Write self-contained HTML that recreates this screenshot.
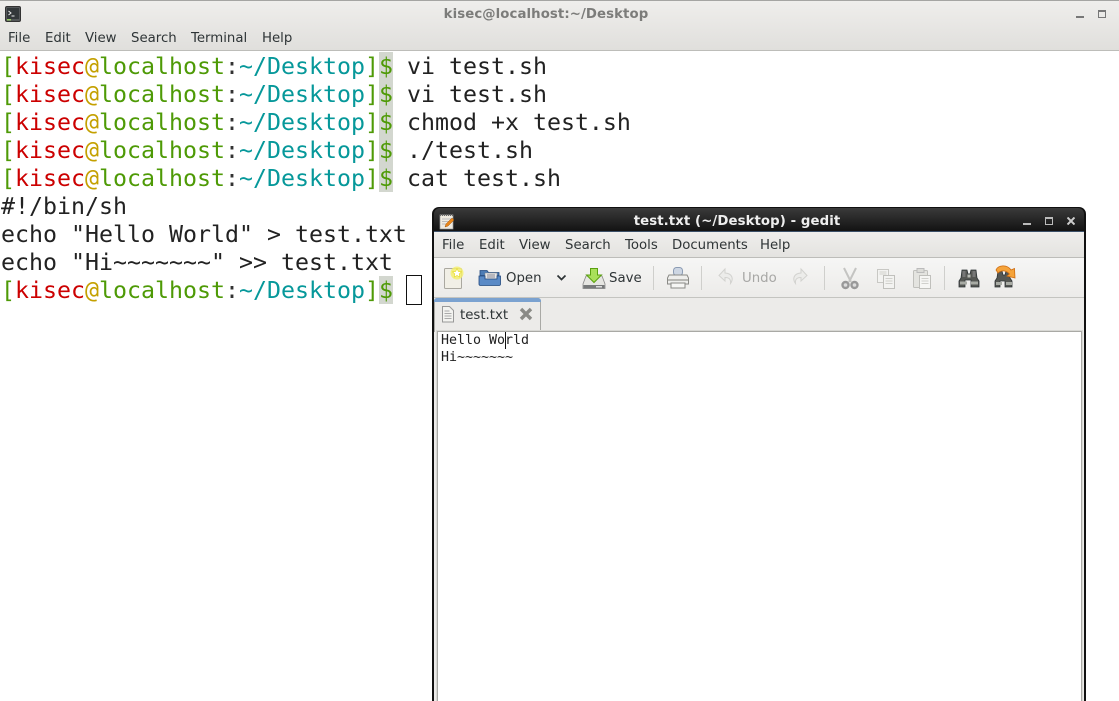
<!DOCTYPE html>
<html><head><meta charset="utf-8"><style>
html,body{margin:0;padding:0;width:1119px;height:701px;overflow:hidden;background:#fff;font-family:"DejaVu Sans",sans-serif}
.a{position:absolute;white-space:pre}
#ttl{left:0;top:0;width:1119px;height:51px;background:linear-gradient(#efeeec,#e0dfdc);border-top:1px solid #a5a5a3;border-bottom:1px solid #bdbdb9;box-sizing:border-box}
.m{font-size:13.3px;color:#2e3436;line-height:16px}
.t{font-family:"DejaVu Sans Mono",monospace;font-size:23.25px;line-height:28px;color:#222;left:1px;height:28px}
.g{color:#4e9a06}.r{color:#cc0000}.y{color:#c4a000}.c{color:#06989a}.k{color:#333}
.d{position:absolute;left:379px;width:14px;background:#d3d7cf}
.s{position:absolute;top:266px;width:1px;height:24px;background:#cfcfcc}
</style></head><body>
<div class="a" id="ttl"></div>
<svg class="a" style="left:5px;top:6px" width="17" height="17" viewBox="0 0 17 17"><rect x=".5" y=".5" width="15" height="15" rx="1.5" fill="#55585a" stroke="#333"/><rect x="2" y="2" width="12" height="11" fill="#33383a"/><path d="M3.500 5l2.500 2-2.500 2M6.500 10h3" stroke="#eee" fill="none"/><rect x="2" y="13" width="4" height="1.500" fill="#9c6"/></svg>
<div class="a" style="left:0;width:1092px;top:7px;text-align:center;font-weight:bold;font-size:13.3px;line-height:16px;color:#7c7c7a;letter-spacing:.08px">kisec@localhost:~/Desktop</div>
<div class="a" style="left:1076px;top:16px;width:8px;height:2px;background:#777"></div>
<div class="a" style="left:1098px;top:10px;width:6px;height:5px;border:1px solid #777;border-top-width:2px"></div>
<div class="a m" style="left:8px;top:31px">File</div>
<div class="a m" style="left:45px;top:31px">Edit</div>
<div class="a m" style="left:85px;top:31px">View</div>
<div class="a m" style="left:131px;top:31px">Search</div>
<div class="a m" style="left:191px;top:31px">Terminal</div>
<div class="a m" style="left:262px;top:31px">Help</div>

<div class="d" style="top:52px;height:140px"></div>
<div class="d" style="top:276px;height:28px"></div>
<div class="a t" style="top:53px"><span class="g">[</span><span class="r">kisec</span><span class="y">@</span><span class="g">localhost</span><span class="k">:</span><span class="c">~/Desktop</span><span class="g">]$</span> vi test.sh</div>
<div class="a t" style="top:81px"><span class="g">[</span><span class="r">kisec</span><span class="y">@</span><span class="g">localhost</span><span class="k">:</span><span class="c">~/Desktop</span><span class="g">]$</span> vi test.sh</div>
<div class="a t" style="top:109px"><span class="g">[</span><span class="r">kisec</span><span class="y">@</span><span class="g">localhost</span><span class="k">:</span><span class="c">~/Desktop</span><span class="g">]$</span> chmod +x test.sh</div>
<div class="a t" style="top:137px"><span class="g">[</span><span class="r">kisec</span><span class="y">@</span><span class="g">localhost</span><span class="k">:</span><span class="c">~/Desktop</span><span class="g">]$</span> ./test.sh</div>
<div class="a t" style="top:165px"><span class="g">[</span><span class="r">kisec</span><span class="y">@</span><span class="g">localhost</span><span class="k">:</span><span class="c">~/Desktop</span><span class="g">]$</span> cat test.sh</div>
<div class="a t" style="top:193px">#!/bin/sh</div>
<div class="a t" style="top:221px">echo "Hello World" &gt; test.txt</div>
<div class="a t" style="top:249px">echo "Hi~~~~~~~" &gt;&gt; test.txt</div>
<div class="a t" style="top:277px"><span class="g">[</span><span class="r">kisec</span><span class="y">@</span><span class="g">localhost</span><span class="k">:</span><span class="c">~/Desktop</span><span class="g">]$</span></div>
<div class="a" style="left:406px;top:275px;width:14px;height:28px;border:1px solid #111"></div>

<!-- gedit window -->
<div class="a" style="left:432px;top:207px;width:654px;height:494px;background:#111;border-radius:7px 7px 0 0"></div>
<div class="a" style="left:434px;top:208px;width:650px;height:24px;background:linear-gradient(#3a3a3a,#111);border-radius:6px 6px 0 0"></div>
<div class="a" style="left:434px;top:231px;width:650px;height:1px;background:#3c5068"></div>
<svg class="a" style="left:439px;top:213px" width="17" height="17" viewBox="0 0 17 17"><rect x="1" y="2" width="13" height="14" fill="#eeeae0" stroke="#999" stroke-width=".7"/><path d="M1 2h13" stroke="#666" stroke-dasharray="1 1" stroke-width="2"/><path d="M3 6h9M3 8.500h7M3 11h6" stroke="#bbb"/><path d="M6 14l1-3 6-6 2 2-6 6z" fill="#e8861a" stroke="#a85a10" stroke-width=".5"/></svg>
<div class="a" style="left:434px;width:606px;top:214px;text-align:center;font-weight:bold;font-size:13.3px;line-height:16px;color:#eee;letter-spacing:.08px">test.txt (~/Desktop) - gedit</div>
<div class="a" style="left:1023px;top:223px;width:8px;height:2px;background:#bbb"></div>
<div class="a" style="left:1045px;top:217px;width:6px;height:5px;border:1px solid #bbb;border-top-width:2px"></div>
<svg class="a" style="left:1067px;top:217px" width="8" height="8" viewBox="0 0 8 8"><path d="M.5.500l7 7M7.500.500l-7 7" stroke="#ccc" stroke-width="2"/></svg>

<div class="a" style="left:434px;top:232px;width:650px;height:469px;background:#ecebe9"></div>
<div class="a" style="left:434px;top:232px;width:650px;height:26px;background:linear-gradient(#efeeec,#e4e3e0);border-bottom:1px solid #bdbdb9;box-sizing:border-box"></div>
<div class="a m" style="left:442px;top:238px">File</div>
<div class="a m" style="left:479px;top:238px">Edit</div>
<div class="a m" style="left:519px;top:238px">View</div>
<div class="a m" style="left:565px;top:238px">Search</div>
<div class="a m" style="left:625px;top:238px">Tools</div>
<div class="a m" style="left:672px;top:238px">Documents</div>
<div class="a m" style="left:760px;top:238px">Help</div>

<div class="a" style="left:434px;top:258px;width:650px;height:40px;background:linear-gradient(#f6f6f5,#ecebe9);border-bottom:1px solid #c4c4c0;box-sizing:border-box"></div>

<!-- New -->
<svg class="a" style="left:442px;top:266px" width="24" height="24" viewBox="0 0 24 24"><rect x="2.500" y="2.500" width="17" height="20" rx="1" fill="#f1efe6" stroke="#aaa8a0"/><circle cx="15" cy="7" r="6.500" fill="#f5ee70" opacity=".85"/><path d="M15 2.500l1.400 3 3.100.4-2.300 2.100.6 3.100-2.800-1.600-2.800 1.600.6-3.100-2.300-2.100 3.100-.4z" fill="#fff" stroke="#e6d820" stroke-width=".6"/></svg>
<!-- Open -->
<svg class="a" style="left:478px;top:267px" width="24" height="22" viewBox="0 0 24 22"><path d="M2 8V3.500h7l1.500 2H21v3H2z" fill="#4d7cb5" stroke="#23497f" stroke-width=".8"/><rect x="7" y="6" width="12" height="6" fill="#e8e8e8" stroke="#888" stroke-width=".5"/><path d="M1 9h6v3h12V9h3.500v8a1.500 1.500 0 0 1-1.500 1.500H2.500A1.500 1.500 0 0 1 1 17z" fill="#5a8ac6" stroke="#23497f" stroke-width=".8"/><path d="M9 8h8M9 10h8" stroke="#667" stroke-width=".7"/></svg>
<div class="a m" style="left:506px;top:271px">Open</div>
<svg class="a" style="left:556px;top:274px" width="11" height="8" viewBox="0 0 11 8"><path d="M1.500 1.500L5.500 5.500 9.500 1.500" fill="none" stroke="#2e3436" stroke-width="1.700"/></svg>
<!-- Save -->
<svg class="a" style="left:582px;top:266px" width="24" height="24" viewBox="0 0 24 24"><path d="M4 10h16l3 8v4.500H1V18z" fill="#e6e6e2" stroke="#888" stroke-width=".8"/><rect x="1.500" y="19" width="21" height="3.500" fill="#77797a"/><rect x="14" y="20" width="6" height="1.500" fill="#ddd"/><path d="M8.500 2.500h7v6.500h4l-7.500 7.500L4.500 9h4z" fill="#a9e05a" stroke="#5aa010"/></svg>
<div class="a m" style="left:609px;top:271px">Save</div>
<div class="s" style="left:653px"></div>
<!-- Print -->
<svg class="a" style="left:666px;top:266px" width="24" height="24" viewBox="0 0 24 24"><rect x="7.500" y="1.500" width="9" height="8" rx="3" fill="#cdd6e3" stroke="#8b9bb3"/><path d="M3 9h18l1.500 3v6h-21v-6z" fill="#eeeeec" stroke="#8a8a86"/><rect x="2" y="13" width="20" height="2" fill="#b8b8b4"/><rect x="5" y="17" width="14" height="5" fill="#f6f6f4" stroke="#8a8a86"/></svg>
<div class="s" style="left:701px"></div>
<!-- Undo -->
<svg class="a" style="left:716px;top:266px" width="22" height="24" viewBox="0 0 22 24"><path d="M9 3L3 9.500 9 15v-3.500c4 0 6 1.500 5.500 6 3-4 2.500-10-5.500-10.500z" fill="#ececea" stroke="#d2d2cf"/></svg>
<div class="a m" style="left:742px;top:271px;color:#a7a7a5">Undo</div>
<!-- Redo -->
<svg class="a" style="left:789px;top:266px" width="22" height="24" viewBox="0 0 22 24"><path d="M12 3l6 6.500-6 5.500v-3.500c-4 0-6 1.500-5.500 6-3-4-2.500-10 5.500-10.500z" fill="#ececea" stroke="#d2d2cf"/></svg>
<div class="s" style="left:824px"></div>
<!-- Cut -->
<svg class="a" style="left:838px;top:266px" width="24" height="24" viewBox="0 0 24 24"><path d="M6 2l7 14M18 2l-7 14" stroke="#c4c4c2" stroke-width="2" fill="none"/><circle cx="7.500" cy="19" r="3" fill="#ddd" stroke="#999" stroke-width="2.400"/><circle cx="16.500" cy="19" r="3" fill="#ddd" stroke="#999" stroke-width="2.400"/></svg>
<!-- Copy -->
<svg class="a" style="left:874px;top:266px" width="24" height="24" viewBox="0 0 24 24"><rect x="3.500" y="3.500" width="11" height="13" fill="#f3f3f1" stroke="#c8c8c4"/><rect x="9.500" y="9.500" width="11" height="13" fill="#f3f3f1" stroke="#c0c0bc"/><path d="M5.500 6h7M5.500 8h7M11.500 12.500h7M11.500 15h7M11.500 17.500h7" stroke="#d0d0cc"/></svg>
<!-- Paste -->
<svg class="a" style="left:910px;top:266px" width="24" height="24" viewBox="0 0 24 24"><rect x="3.500" y="4.500" width="14" height="17" rx="1" fill="#e4e4e0" stroke="#c0c0bc"/><rect x="7" y="2.500" width="7" height="4" fill="#dcdcd8" stroke="#bbb"/><rect x="9.500" y="9.500" width="11" height="13" fill="#f6f6f4" stroke="#c0c0bc"/><path d="M11.500 12.500h7M11.500 15h7M11.500 17.500h7" stroke="#d0d0cc"/></svg>
<div class="s" style="left:944px"></div>
<!-- Find -->
<svg class="a" style="left:957px;top:266px" width="24" height="24" viewBox="0 0 24 24"><path d="M5 4h5l1 4h2l1-4h5l1 8 2 3v6h-8v-7h-6v7H2v-6l2-3z" fill="#555753" stroke="#2e3436" stroke-width=".8"/><path d="M5.500 5h3v6h-3zM15.500 5h3v6h-3z" fill="#777"/><rect x="3" y="15.500" width="7" height="3" fill="#a8aba4"/><rect x="14" y="15.500" width="7" height="3" fill="#a8aba4"/><rect x="10.500" y="8.500" width="3" height="3" fill="#babdb6"/></svg>
<!-- Replace -->
<svg class="a" style="left:993px;top:264px" width="25" height="26" viewBox="0 0 25 26"><path d="M5 7h4l1 4h2l1-4h3l1 7 2 3v6h-7v-6h-5v6H2v-6l2-3z" fill="#555753" stroke="#2e3436" stroke-width=".8"/><rect x="3" y="18" width="6" height="3" fill="#a8aba4"/><rect x="13" y="18" width="6" height="3" fill="#a8aba4"/><path d="M3 6C5 1 14 0 18 6l3.500-1.500L22 14l-8-2 2.500-2C13 6 8 6 5 9z" fill="#f5a33a" stroke="#ce6c10" stroke-width=".8"/></svg>

<!-- Tab -->
<div class="a" style="left:434px;top:298px;width:107px;height:34px;background:#ecebe9;border:1px solid #a9a9a5;border-bottom:none;border-radius:3px 3px 0 0;box-sizing:border-box"></div>
<div class="a" style="left:434px;top:298px;width:107px;height:4px;background:#7ba2d0;border-radius:3px 3px 0 0"></div>
<svg class="a" style="left:440px;top:306px" width="16" height="17" viewBox="0 0 16 17"><path d="M2.500.5h7l4 4v11.500h-11z" fill="#f3f3f0" stroke="#999"/><path d="M4.500 5h5M4.500 7.500h7M4.500 10h7M4.500 12.500h7" stroke="#aaa"/></svg>
<div class="a m" style="left:460px;top:308px">test.txt</div>
<svg class="a" style="left:519px;top:307px" width="14" height="14" viewBox="0 0 14 14"><path d="M2 2l10 10M12 2L2 12" stroke="#8a8a86" stroke-width="3.400"/></svg>

<!-- Editor -->
<div class="a" style="left:437px;top:331px;width:645px;height:370px;background:#fff;border:1px solid #a9a9a5;border-bottom:none;box-sizing:border-box;outline:1px solid #d8d8d4"></div>
<div class="a" style="left:441px;top:332px;font-family:'DejaVu Sans Mono',monospace;font-size:13.3px;line-height:17px;color:#222">Hello World
Hi~~~~~~~</div>
<div class="a" style="left:505px;top:332px;width:1px;height:17px;background:#111"></div>
</body></html>
